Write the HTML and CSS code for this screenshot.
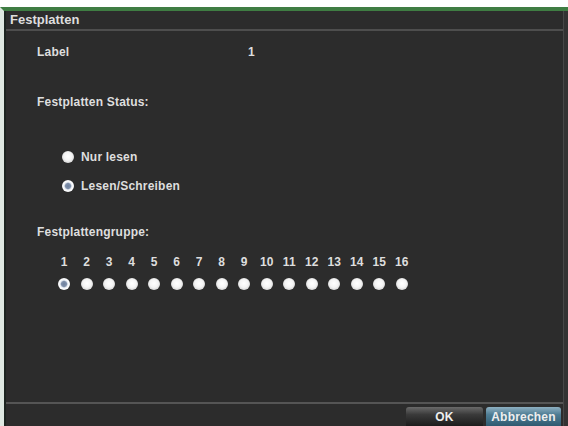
FILE: index.html
```html
<!DOCTYPE html>
<html lang="de">
<head>
    <meta charset="UTF-8">
    <title>Festplatten</title>
    <link rel="stylesheet" href="styles.css">
</head>
<body>
    <div class="frame">
        <div class="window">
            <div class="title">Festplatten</div>
            <div class="content">
                <div class="row label-row">
                    <span class="key">Label</span>
                    <span class="val">1</span>
                </div>
                <div class="row status-head">Festplatten Status:</div>
                <div class="row radio first-radio"><span class="dot"></span>Nur lesen</div>
                <div class="row radio"><span class="dot checked"></span>Lesen/Schreiben</div>
                <div class="row group-head">Festplattengruppe:</div>
                <div class="groups">
                    <span>1</span><span>2</span><span>3</span><span>4</span>
                    <span>5</span><span>6</span><span>7</span><span>8</span>
                    <span>9</span><span>10</span><span>11</span><span>12</span>
                    <span>13</span><span>14</span><span>15</span><span>16</span>
                    <i class="dot checked"></i><i class="dot"></i><i class="dot"></i><i class="dot"></i>
                    <i class="dot"></i><i class="dot"></i><i class="dot"></i><i class="dot"></i>
                    <i class="dot"></i><i class="dot"></i><i class="dot"></i><i class="dot"></i>
                    <i class="dot"></i><i class="dot"></i><i class="dot"></i><i class="dot"></i>
                </div>
            </div>
            <div class="footer">
                <button class="btn ok">OK</button>
                <button class="btn cancel">Abbrechen</button>
            </div>
        </div>
    </div>
</body>
</html>
```
FILE: styles.css
```css
html, body {
    margin: 0;
    padding: 0;
    background-color: #fff;
    height: 426px;
    overflow: hidden;
}
body {
    font-family: "Liberation Sans", Arial, sans-serif;
    color: #dedede;
    font-size: 12px;
    font-weight: bold;
    letter-spacing: 0.2px;
}
.frame {
    margin-top: 7px;
    border-top: 4px solid #3f7d43;
    border-left: 4px solid #dfe8e2;
    background-color: #333;
    height: 415px;
    display: flex;
}
.window {
    width: 557px;
    border-left: 2px solid #1d2521;
    border-right: 1px solid #474747;
    background-color: #2c2c2c;
    display: flex;
    flex-direction: column;
}
.title {
    font-size: 13px;
    letter-spacing: 0;
    height: 18px;
    line-height: 18px;
    padding-left: 4px;
    border-bottom: 2px solid #4e4e4e;
}
.content {
    flex: 1;
    padding-left: 31px;
}
.row {
    height: 16px;
    line-height: 16px;
    display: flex;
    align-items: center;
}
.label-row {
    margin-top: 13px;
}
.label-row .key {
    width: 211px;
}
.status-head {
    margin-top: 34px;
}
.radio {
    margin-left: 25px;
}
.first-radio {
    margin-top: 39px;
}
.radio + .radio {
    margin-top: 13px;
}
.radio .dot {
    margin-right: 7px;
}
.group-head {
    margin-top: 30px;
}
.dot {
    display: inline-block;
    width: 12px;
    height: 12px;
    border-radius: 50%;
    background: radial-gradient(circle at 50% 45%, #fff 0, #f4f4f4 45%, #bdbdbd 100%);
}
.dot.checked {
    background: radial-gradient(circle, #6d7f9c 0, #7f90ab 30%, #e8ecf2 45%, #fff 60%, #b9bec8 100%);
}
.groups {
    margin-top: 14px;
    margin-left: 16px;
    display: grid;
    grid-template-columns: repeat(16, 22.5px);
    grid-template-rows: 16px 12px;
    row-gap: 8px;
    justify-items: center;
    align-items: center;
}
.groups span {
    line-height: 16px;
}
.footer {
    height: 22px;
    border-top: 2px solid #555;
    display: flex;
    justify-content: flex-end;
    align-items: flex-end;
    gap: 3px;
    padding-right: 2px;
}
.btn {
    font-family: "Liberation Sans", Arial, sans-serif;
    font-size: 12px;
    font-weight: bold;
    letter-spacing: 0.2px;
    color: #eee;
    border: none;
    padding: 0;
    height: 19px;
    border-radius: 3px 3px 0 0;
}
.ok {
    width: 77px;
    background: linear-gradient(#6a6a6a, #3a3a3a 40%, #1c1c1c);
}
.cancel {
    width: 75px;
    background: linear-gradient(#8eb0c2, #4f7d94 40%, #2e5a70);
}
```
